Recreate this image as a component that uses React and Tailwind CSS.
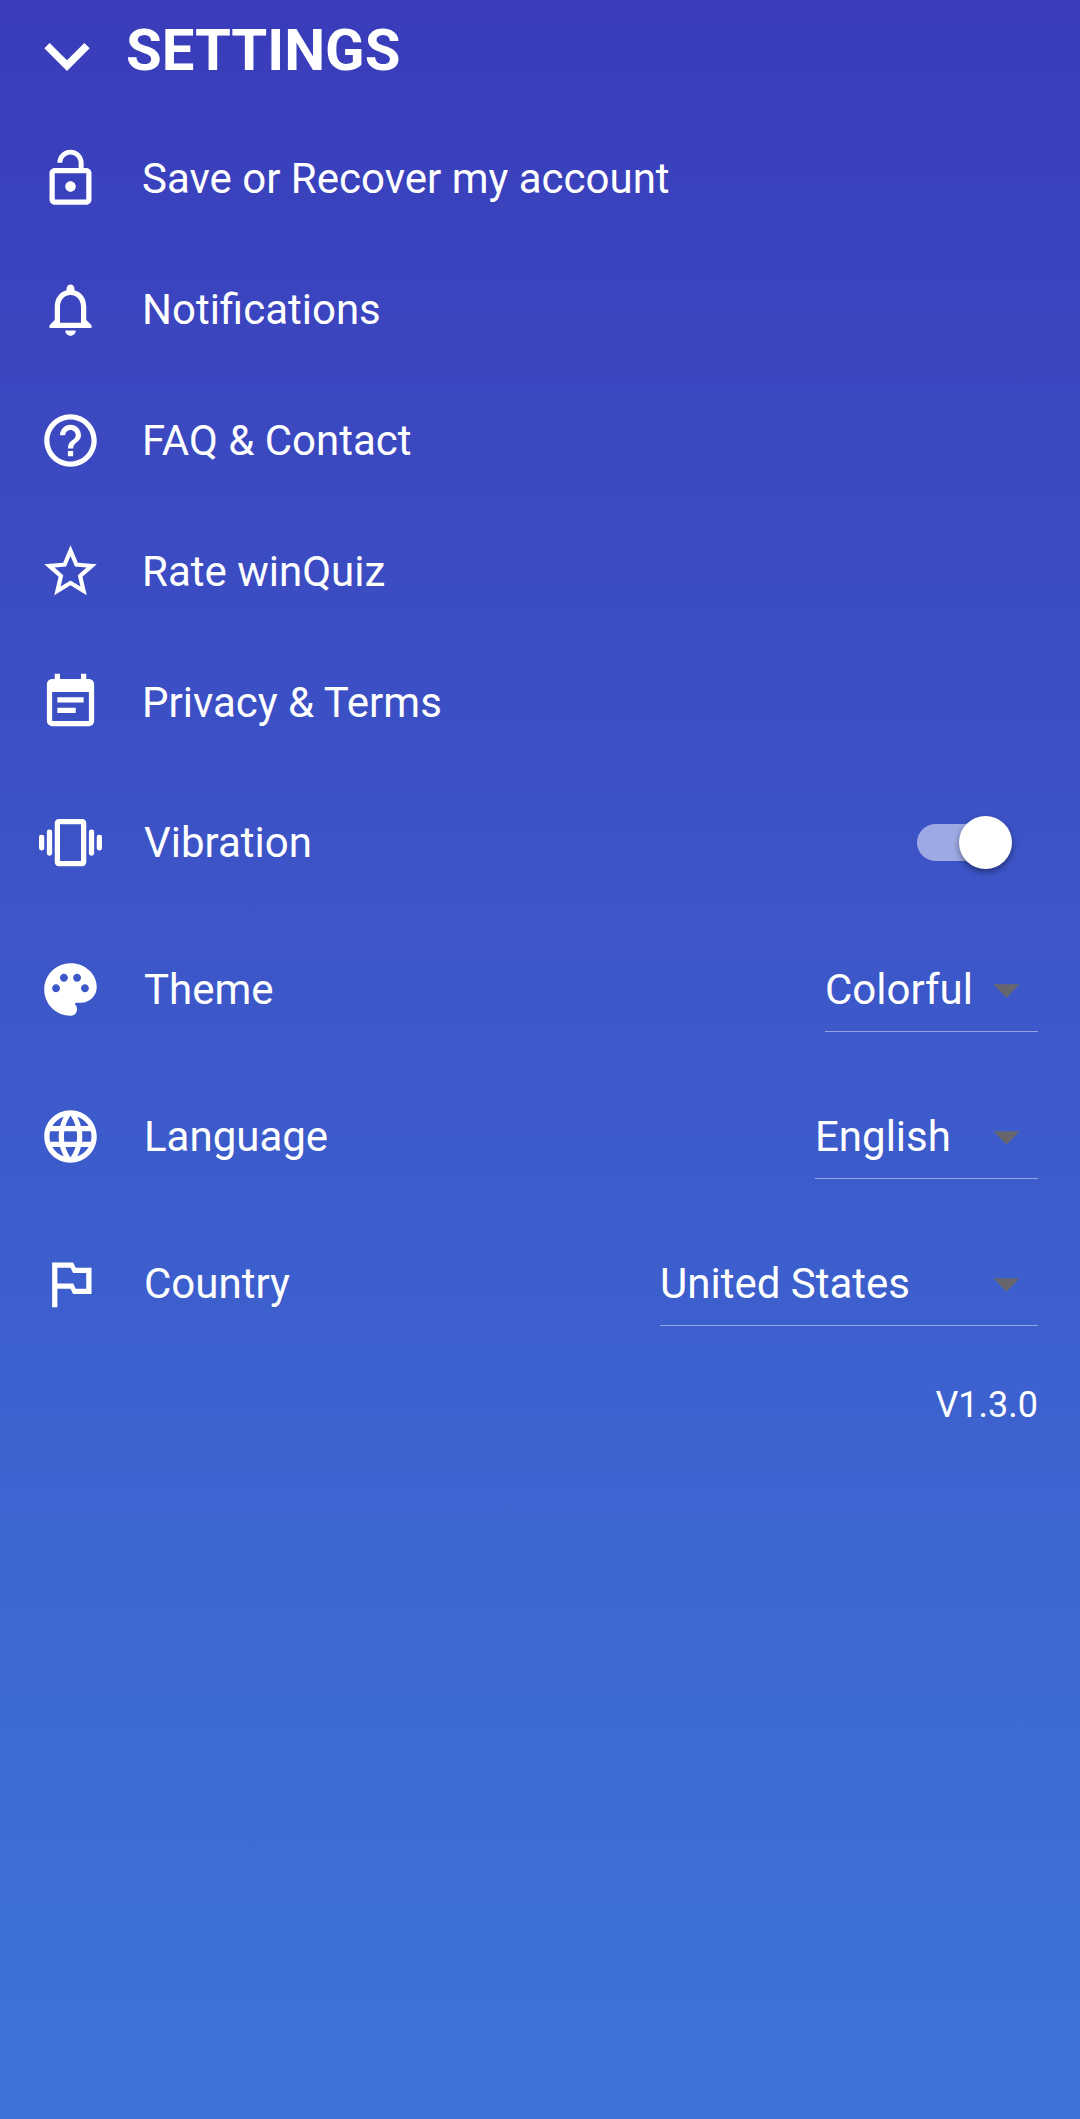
import React, { useState } from "react";
import {
  MdLockOpen,
  MdNotificationsNone,
  MdHelpOutline,
  MdStarBorder,
  MdEventNote,
  MdLanguage,
  MdOutlinedFlag,
  MdArrowDropDown,
} from "react-icons/md";

const VibrationIcon = ({ className }) => (
  <svg viewBox="0 0 24 24" fill="currentColor" className={className}>
    <rect x="0" y="9" width="2" height="6" rx="0.9" />
    <rect x="3" y="7" width="2" height="10" rx="0.9" />
    <rect x="19" y="7" width="2" height="10" rx="0.9" />
    <rect x="22" y="9" width="2" height="6" rx="0.9" />
    <path d="M16.5 3h-9C6.67 3 6 3.67 6 4.5v15c0 .83.67 1.5 1.5 1.5h9c.83 0 1.5-.67 1.5-1.5v-15c0-.83-.67-1.5-1.5-1.5zM16 19H8V5h8v14z" />
  </svg>
);

const PaletteIcon = ({ className }) => (
  <svg viewBox="0 0 24 24" fill="currentColor" className={className}>
    <path d="M12 2C6.49 2 2 6.49 2 12s4.49 10 10 10c1.38 0 2.5-1.12 2.5-2.5 0-.61-.23-1.2-.64-1.67-.08-.1-.13-.21-.13-.33 0-.28.22-.5.5-.5H16c3.31 0 6-2.69 6-6 0-4.96-4.49-9-10-9zm5.5 11c-.83 0-1.5-.67-1.5-1.5s.67-1.5 1.5-1.5 1.5.67 1.5 1.5-.67 1.5-1.5 1.5zm-3-4c-.83 0-1.5-.67-1.5-1.5S13.67 6 14.5 6s1.5.67 1.5 1.5S15.33 9 14.5 9zM5 11.5c0-.83.67-1.5 1.5-1.5s1.5.67 1.5 1.5S7.33 13 6.5 13 5 12.33 5 11.5zm6-4c0 .83-.67 1.5-1.5 1.5S8 8.33 8 7.5 8.67 6 9.5 6s1.5.67 1.5 1.5z" />
  </svg>
);

const links = [
  { label: "Save or Recover my account", Icon: MdLockOpen },
  { label: "Notifications", Icon: MdNotificationsNone },
  { label: "FAQ & Contact", Icon: MdHelpOutline },
  { label: "Rate winQuiz", Icon: MdStarBorder },
  { label: "Privacy & Terms", Icon: MdEventNote },
];

const selects = [
  {
    id: "theme",
    label: "Theme",
    Icon: PaletteIcon,
    options: ["Colorful", "Dark", "Light"],
    width: "w-[213px]",
  },
  {
    id: "language",
    label: "Language",
    Icon: MdLanguage,
    options: ["English", "Français", "Español"],
    width: "w-[223px]",
  },
  {
    id: "country",
    label: "Country",
    Icon: MdOutlinedFlag,
    options: ["United States", "France", "Canada"],
    width: "w-[378px]",
  },
];

// Row with an icon and label on the left and a control on the right
const SettingRow = ({ id, label, Icon, children }) => (
  <div className="flex h-[147px] items-center justify-between">
    <label htmlFor={id} className="flex items-center gap-[42px]">
      <Icon className="size-[63px] shrink-0" />
      {label}
    </label>
    {children}
  </div>
);

const App = () => {
  const [vibration, setVibration] = useState(true);
  const [values, setValues] = useState({
    theme: "Colorful",
    language: "English",
    country: "United States",
  });

  return (
    <div className="min-h-screen w-full bg-linear-to-b from-[#3a3cba] to-[#3e74d9] font-['Roboto',sans-serif] text-[42px] leading-[50px] text-white">
      <header className="flex h-[113px] items-start gap-[36px] pt-[15px] pl-[44px]">
        <button type="button" aria-label="Close settings" className="flex h-[70px] items-center pt-[14px]">
          <svg viewBox="6 8.59 12 7.41" fill="currentColor" className="h-[28px] w-[46px]">
            <path d="M7.41 8.59 12 13.17l4.59-4.58L18 10l-6 6-6-6z" />
          </svg>
        </button>
        <h1 className="text-[58px] leading-[70px] font-bold">SETTINGS</h1>
      </header>

      <main className="pr-[42px] pl-[39px]">
        <nav>
          {links.map(({ label, Icon }) => (
            <button
              key={label}
              type="button"
              className="flex h-[131px] w-full items-center gap-[40px] text-left"
            >
              <Icon className="size-[63px] shrink-0" />
              {label}
            </button>
          ))}
        </nav>

        <section className="mt-px">
          <SettingRow id="vibration" label="Vibration" Icon={VibrationIcon}>
            <span className="relative mr-[26px] flex h-[53px] w-[95px] items-center">
              <input
                id="vibration"
                type="checkbox"
                checked={vibration}
                onChange={(e) => setVibration(e.target.checked)}
                className="peer absolute inset-0 z-10 cursor-pointer opacity-0"
              />
              <span className="h-[37px] w-[89px] rounded-full bg-white/50" />
              <span className="absolute top-0 left-0 size-[53px] rounded-full bg-white shadow-[0_3px_6px_rgba(0,0,0,0.4)] transition-all peer-checked:left-[42px]" />
            </span>
          </SettingRow>

          {selects.map(({ id, label, Icon, options, width }) => (
            <SettingRow key={id} id={id} label={label} Icon={Icon}>
              <div className={`relative ${width}`}>
                <select
                  id={id}
                  value={values[id]}
                  onChange={(e) => setValues({ ...values, [id]: e.target.value })}
                  className="block h-[84px] w-full appearance-none border-b border-white/45 bg-transparent pt-0.5 pr-[63px] outline-none"
                >
                  {options.map((option) => (
                    <option key={option} className="text-black">
                      {option}
                    </option>
                  ))}
                </select>
                <MdArrowDropDown className="pointer-events-none absolute top-[10px] right-0 size-[63px] text-[#66666c]" />
              </div>
            </SettingRow>
          ))}
        </section>

        <p className="mt-[26px] text-right text-[36px] leading-[44px]">V1.3.0</p>
      </main>
    </div>
  );
};

export default App;
